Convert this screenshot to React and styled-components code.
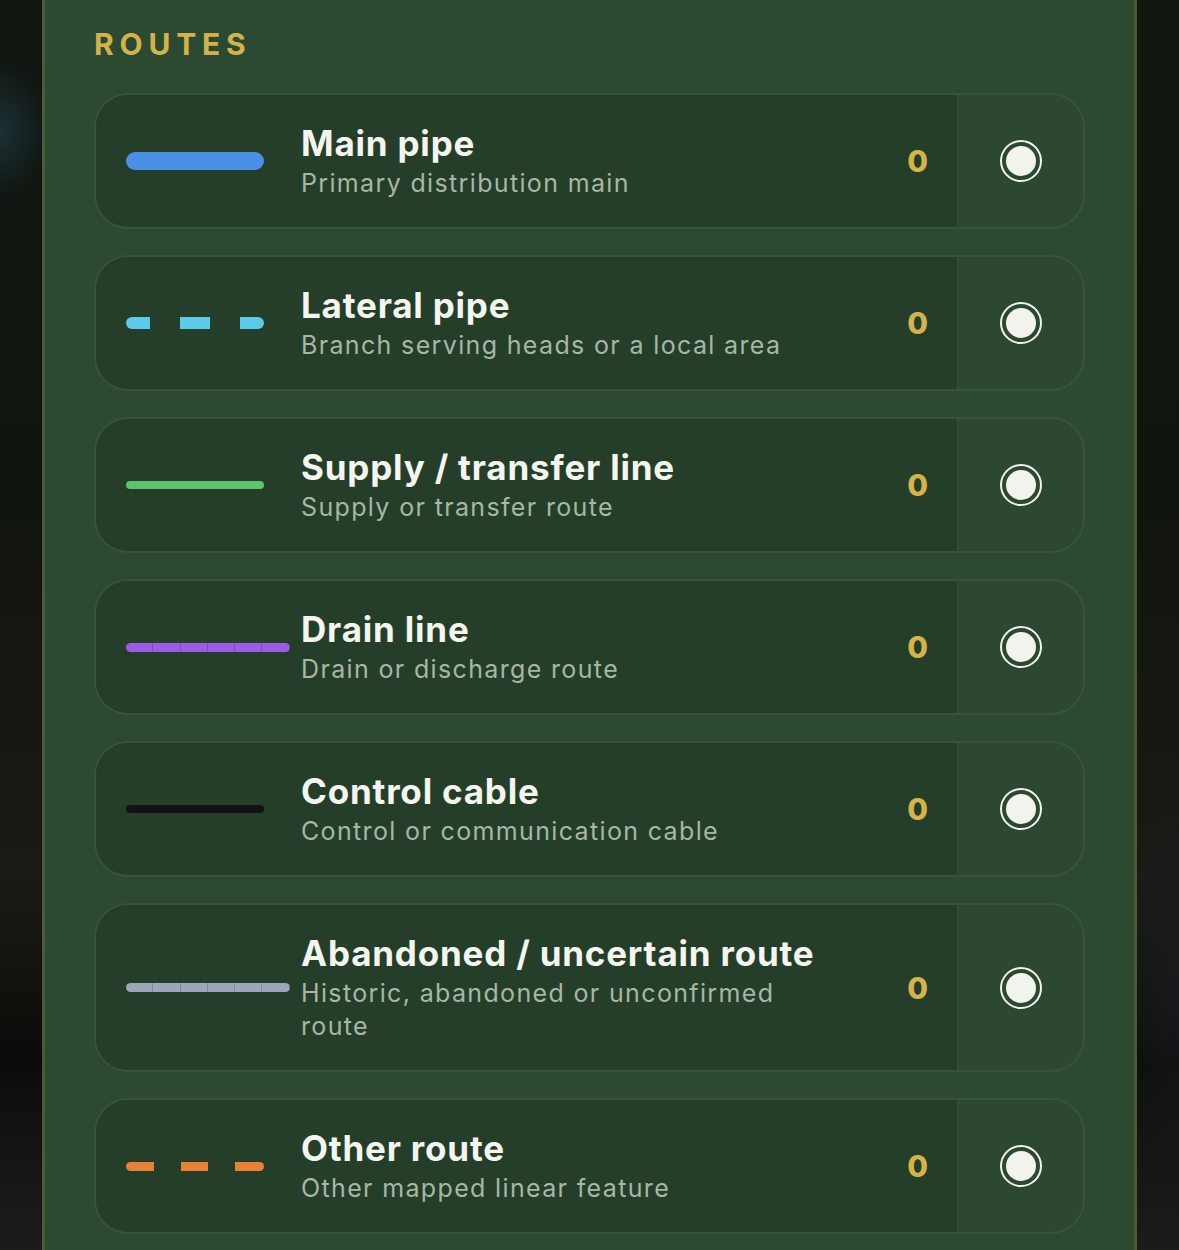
import React from "react";
import styled, { createGlobalStyle } from "styled-components";

const GlobalStyle = createGlobalStyle`
  html, body {
    margin: 0;
    padding: 0;
    height: 100%;
  }
  body {
    font-family: "Inter", "Noto Sans", sans-serif;
    background-color: #10140f;
    background-image:
      radial-gradient(50px 70px at 0px 130px, rgba(40, 80, 100, 0.45), transparent),
      radial-gradient(90px 200px at 1179px 1000px, rgba(40, 50, 70, 0.25), transparent),
      linear-gradient(180deg, #111610 0%, #10140e 40%, #1a1915 70%, #0b0c09 85%, #1e1c1a 100%);
    -webkit-font-smoothing: antialiased;
  }
`;

const routes = [
  { name: "Main pipe", desc: "Primary distribution main", kind: "solid", color: "#4a90e6", size: 18 },
  { name: "Lateral pipe", desc: "Branch serving heads or a local area", kind: "dashed", color: "#5ccbea", size: 12 },
  { name: "Supply / transfer line", desc: "Supply or transfer route", kind: "solid", color: "#5cc46c", size: 8 },
  { name: "Drain line", desc: "Drain or discharge route", kind: "segmented", color: "#9c5ce8", size: 9 },
  { name: "Control cable", desc: "Control or communication cable", kind: "solid", color: "#121312", size: 8 },
  { name: "Abandoned / uncertain route", desc: "Historic, abandoned or unconfirmed route", kind: "segmented", color: "#9ba6bb", size: 9 },
  { name: "Other route", desc: "Other mapped linear feature", kind: "dashed", color: "#ea8139", size: 9 },
];

const Panel = styled.section`
  margin: 0 42px;
  min-height: 100vh;
  box-sizing: border-box;
  background: #2c4931;
  border-left: 3px solid #4b5b37;
  border-right: 3px solid #4b5b37;
  padding: 26px 49px 40px;
`;

const Heading = styled.h2`
  margin: 0 0 31px;
  font-size: 30px;
  line-height: 36px;
  font-weight: 700;
  letter-spacing: 5.8px;
  color: #d4b24b;
`;

const List = styled.div`
  display: flex;
  flex-direction: column;
  gap: 26px;
`;

const Card = styled.div`
  display: flex;
  align-items: stretch;
  box-sizing: border-box;
  border: 2px solid rgba(255, 255, 255, 0.06);
  border-radius: 34px;
  overflow: hidden;
  background: #2c4831;
`;

const Main = styled.div`
  flex: 1;
  min-width: 0;
  display: flex;
  align-items: center;
  padding: 27px 29px 27px 30px;
  background: #253e2a;
  border-right: 2px solid rgba(255, 255, 255, 0.07);
`;

const SwatchCell = styled.div`
  width: 175px;
  flex-shrink: 0;
  display: flex;
  align-items: center;
`;

const dashStops = (c, big) =>
  big
    ? `${c} 0 24px, transparent 24px 54px, ${c} 54px 84px, transparent 84px 114px, ${c} 114px`
    : `${c} 0 28px, transparent 28px 55px, ${c} 55px 82px, transparent 82px 109px, ${c} 109px`;

const Swatch = styled.div`
  width: ${(p) => (p.$kind === "segmented" ? 164 : 138)}px;
  height: ${(p) => p.$size}px;
  border-radius: ${(p) => p.$size / 2}px;
  background: ${(p) =>
    p.$kind === "dashed"
      ? `linear-gradient(90deg, ${dashStops(p.$color, p.$size > 10)})`
      : p.$kind === "segmented"
      ? `repeating-linear-gradient(90deg, ${p.$color} 0 26.3px, rgba(0,0,0,0.18) 26.3px 27.3px), ${p.$color}`
      : p.$color};
`;

const Text = styled.div`
  flex: 1;
  min-width: 0;
  padding-right: 70px;
  display: flex;
  flex-direction: column;
`;

const Title = styled.div`
  font-size: 35px;
  line-height: 42px;
  font-weight: 700;
  letter-spacing: 0.8px;
  color: #f3f5ee;
  white-space: nowrap;
`;

const Desc = styled.div`
  margin-top: 3px;
  font-size: 25px;
  line-height: 33px;
  letter-spacing: 1.35px;
  color: #a7b7a4;
`;

const Count = styled.div`
  font-size: 30px;
  font-weight: 800;
  color: #d4b44a;
  flex-shrink: 0;
`;

const Toggle = styled.div`
  width: 124px;
  flex-shrink: 0;
  display: flex;
  align-items: center;
  justify-content: center;
`;

const Radio = styled.span`
  width: 42px;
  height: 42px;
  box-sizing: border-box;
  border: 2px solid #f3f3ee;
  border-radius: 50%;
  display: flex;
  align-items: center;
  justify-content: center;
  &::after {
    content: "";
    width: 30px;
    height: 30px;
    border-radius: 50%;
    background: #f3f3ee;
  }
`;

export default function App() {
  return (
    <>
      <GlobalStyle />
      <Panel>
        <Heading>ROUTES</Heading>
        <List>
          {routes.map((r) => (
            <Card key={r.name}>
              <Main>
                <SwatchCell>
                  <Swatch $kind={r.kind} $color={r.color} $size={r.size} />
                </SwatchCell>
                <Text>
                  <Title>{r.name}</Title>
                  <Desc>{r.desc}</Desc>
                </Text>
                <Count>0</Count>
              </Main>
              <Toggle>
                <Radio />
              </Toggle>
            </Card>
          ))}
        </List>
      </Panel>
    </>
  );
}
